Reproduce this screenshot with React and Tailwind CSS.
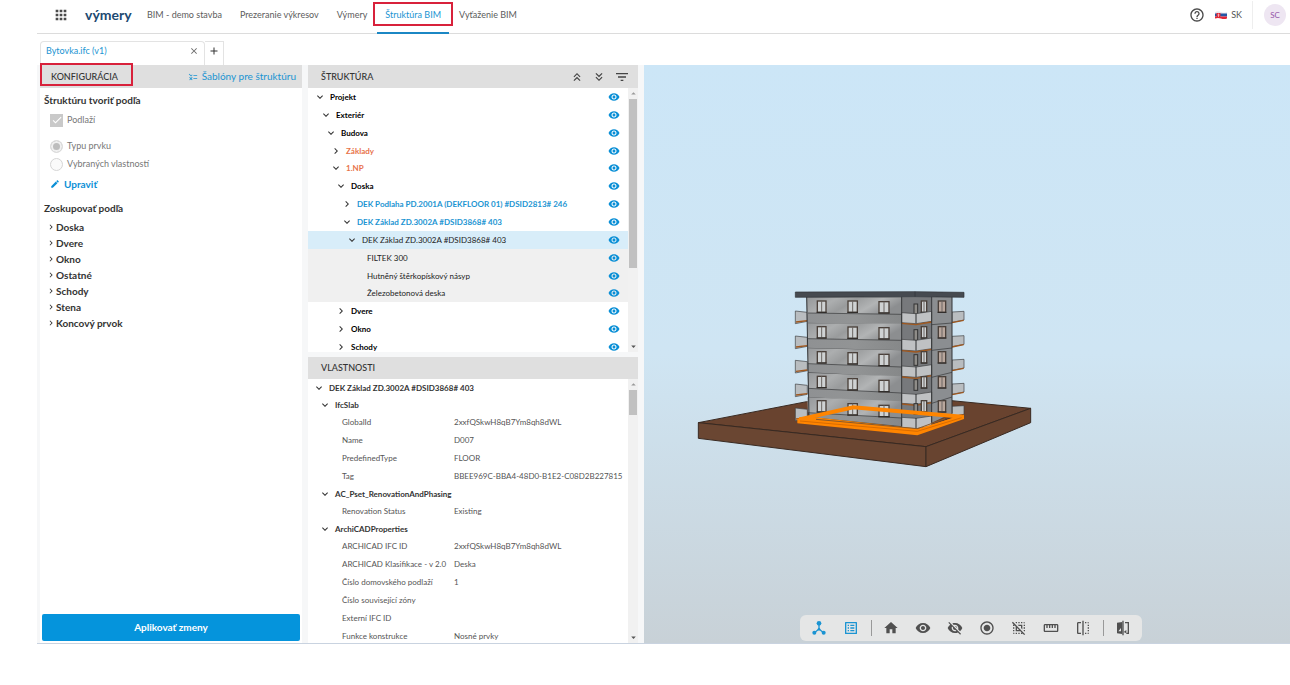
import { Fragment, useState } from "react";
import clsx from "clsx";
import {
  MdAdd,
  MdApps,
  MdArrowDropDown,
  MdArrowDropUp,
  MdCheck,
  MdChevronRight,
  MdClose,
  MdDeselect,
  MdEdit,
  MdExpandMore,
  MdFilterList,
  MdFlip,
  MdHelpOutline,
  MdHome,
  MdKeyboardDoubleArrowDown,
  MdKeyboardDoubleArrowUp,
  MdOutlineListAlt,
  MdOutlineStraighten,
  MdRadioButtonChecked,
  MdRule,
  MdVisibility,
  MdVisibilityOff,
} from "react-icons/md";

const navItems = [
  { label: "BIM - demo stavba" },
  { label: "Prezeranie výkresov" },
  { label: "Výmery" },
  { label: "Štruktúra BIM", active: true },
  { label: "Vyťaženie BIM" },
];

const groups = ["Doska", "Dvere", "Okno", "Ostatné", "Schody", "Stena", "Koncový prvok"];

const tree = [
  { label: "Projekt", indent: "pl-[6px]", open: true, tone: "font-bold text-black" },
  { label: "Exteriér", indent: "pl-[12px]", open: true, tone: "font-bold text-black" },
  { label: "Budova", indent: "pl-[17px]", open: true, tone: "font-bold text-black" },
  { label: "Základy", indent: "pl-[22px]", open: false, tone: "font-bold text-[#e8734a]" },
  { label: "1.NP", indent: "pl-[22px]", open: true, tone: "font-bold text-[#e8734a]" },
  { label: "Doska", indent: "pl-[27px]", open: true, tone: "font-bold text-black" },
  {
    label: "DEK Podlaha PD.2001A (DEKFLOOR 01) #DSID2813# 246",
    indent: "pl-[33px]",
    open: false,
    tone: "font-bold text-[#1b94d2]",
  },
  {
    label: "DEK Základ ZD.3002A #DSID3868# 403",
    indent: "pl-[33px]",
    open: true,
    tone: "font-bold text-[#1b94d2]",
  },
  {
    label: "DEK Základ ZD.3002A #DSID3868# 403",
    indent: "pl-[38px]",
    open: true,
    tone: "text-[#222]",
    row: "bg-[#d8edf9]",
  },
  { label: "FILTEK 300", indent: "pl-[59px]", tone: "text-[#222]", row: "bg-[#f0f0f0]" },
  { label: "Hutněný štěrkopískový násyp", indent: "pl-[59px]", tone: "text-[#222]", row: "bg-[#f0f0f0]" },
  { label: "Železobetonová deska", indent: "pl-[59px]", tone: "text-[#222]", row: "bg-[#f0f0f0]" },
  { label: "Dvere", indent: "pl-[27px]", open: false, tone: "font-bold text-black" },
  { label: "Okno", indent: "pl-[27px]", open: false, tone: "font-bold text-black" },
  { label: "Schody", indent: "pl-[27px]", open: false, tone: "font-bold text-black" },
];

const propertySets = [
  {
    name: "IfcSlab",
    rows: [
      ["GlobalId", "2xxfQSkwH8qB7Ym8qh8dWL"],
      ["Name", "D007"],
      ["PredefinedType", "FLOOR"],
      ["Tag", "BBEE969C-BBA4-48D0-B1E2-C08D2B227815"],
    ],
  },
  { name: "AC_Pset_RenovationAndPhasing", rows: [["Renovation Status", "Existing"]] },
  {
    name: "ArchiCADProperties",
    rows: [
      ["ARCHICAD IFC ID", "2xxfQSkwH8qB7Ym8qh8dWL"],
      ["ARCHICAD Klasifikace - v 2.0", "Deska"],
      ["Číslo domovského podlaží", "1"],
      ["Číslo související zóny", ""],
      ["Externí IFC ID", ""],
      ["Funkce konstrukce", "Nosné prvky"],
    ],
  },
];

function Header() {
  return (
    <header className="flex h-[34px] shrink-0 items-center border-b border-[#dcdcdc] pl-4">
      <button aria-label="Aplikácie" className="-mt-1 text-[#4a4a4a]">
        <MdApps className="size-4" />
      </button>
      <a href="#" className="-mt-1 ml-4 w-[62px] text-[14px] font-bold text-[#1d4a72]">
        výmery
      </a>
      <nav className="flex h-full gap-[18px] text-[9px] text-[#5c5c5c]">
        {navItems.map((item) => (
          <a
            key={item.label}
            href="#"
            className={clsx(
              "relative flex h-[33px] items-center pb-1",
              item.active && "text-[#1b94d2]"
            )}
          >
            {item.label}
            {item.active && (
              <>
                <span className="absolute -inset-x-3 top-[2px] h-6 border-2 border-[#d8213b]" />
                <span className="absolute -inset-x-2 -bottom-px h-[2px] bg-[#1b87c4]" />
              </>
            )}
          </a>
        ))}
      </nav>
      <div className="-mt-1 ml-auto flex items-center">
        <button aria-label="Pomoc" className="text-[#4a4a4a]">
          <MdHelpOutline className="size-4" />
        </button>
        <button className="ml-[10px] flex items-center gap-1 text-[9px] text-[#555]">
          <svg viewBox="0 0 24 16" className="h-2 w-3">
            <path d="M0 2q6-3 12 0t12 0v4H0z" fill="#e9e6ee" />
            <path d="M0 5h24v6H0z" fill="#2556a5" />
            <path d="M0 11h24v4q-6 2-12 0T0 15z" fill="#e32636" />
            <path d="M3 4h8v5q0 4-4 5-4-1-4-5z" fill="#e32636" />
            <path d="M7 5v7M5 8h4" stroke="#fff" />
          </svg>
          SK
        </button>
        <span className="ml-[10px] h-7 w-px bg-[#eee]" />
        <button className="mr-1 ml-[11px] flex size-[22px] items-center justify-center rounded-full bg-[#eee6f2] text-[8px] text-[#9556a8]">
          SC
        </button>
      </div>
    </header>
  );
}

function FileTabs() {
  return (
    <div className="flex h-[31px] shrink-0 items-end pl-[3px]">
      <div className="flex h-6 w-[165px] items-center justify-between rounded-t-sm border border-b-0 border-[#e3e3e3] px-[5px] pb-[6px]">
        <a href="#" className="text-[9px] text-[#1b94d2]">
          Bytovka.ifc (v1)
        </a>
        <button aria-label="Zavrieť" className="text-[#666]">
          <MdClose className="size-[10px]" />
        </button>
      </div>
      <button
        aria-label="Pridať"
        className="flex h-6 w-[19px] items-center justify-center border border-b-0 border-l-0 border-[#e3e3e3] pb-[6px] text-[#333]"
      >
        <MdAdd className="size-3" />
      </button>
    </div>
  );
}

function PanelTitle({ children }) {
  return <h2 className="text-[9px] font-medium text-[#333]">{children}</h2>;
}

function ConfigPanel() {
  const [mode] = useState("type");

  return (
    <section className="flex w-[262px] shrink-0 flex-col bg-white">
      <div className="relative flex h-[23px] items-center justify-between bg-[#dfdfdf] pr-[6px] pl-[11px]">
        <PanelTitle>KONFIGURÁCIA</PanelTitle>
        <span className="absolute -top-[2px] left-0 h-[23px] w-[93px] border-2 border-[#d8213b]" />
        <button className="flex items-center gap-1 text-[10px] text-[#1b94d2]">
          <MdRule className="size-[10px] -scale-x-100" />
          Šablóny pre štruktúru
        </button>
      </div>
      <div className="flex-1 px-1 text-[9px] text-[#777]">
        <h3 className="pt-1 text-[10px] leading-4 font-bold text-[#333]">Štruktúru tvoriť podľa</h3>
        <label className="mt-1 flex h-4 items-center gap-1 pl-[6px]">
          <input type="checkbox" checked disabled className="peer sr-only" />
          <span className="flex size-[13px] items-center justify-center bg-[#c9c9c9] text-white">
            <MdCheck className="size-3" />
          </span>
          Podlaží
        </label>
        <label className="mt-[9px] flex h-[18px] items-center gap-1 pl-[6px]">
          <input
            type="radio"
            name="mode"
            disabled
            checked={mode === "type"}
            className="size-[13px] appearance-none rounded-full border border-[#dcdcdc] bg-[#bdbdbd] shadow-[inset_0_0_0_2px_#f0f0f0]"
          />
          Typu prvku
        </label>
        <label className="flex h-[18px] items-center gap-1 pl-[6px]">
          <input
            type="radio"
            name="mode"
            disabled
            checked={mode === "properties"}
            className="size-[13px] appearance-none rounded-full border border-[#d5d5d5] bg-[#fafafa]"
          />
          Vybraných vlastností
        </label>
        <button className="mt-[3px] flex h-4 items-center gap-1 pl-[6px] text-[10px] font-bold text-[#0a8fd6]">
          <MdEdit className="size-[10px]" />
          Upraviť
        </button>
        <h3 className="mt-2 text-[10px] leading-4 font-bold text-[#333]">Zoskupovať podľa</h3>
        <ul className="mt-[3px] text-[10px] font-bold text-[#333]">
          {groups.map((group) => (
            <li key={group}>
              <button className="flex h-4 items-center pl-[2px]">
                <MdChevronRight className="size-[10px]" />
                {group}
              </button>
            </li>
          ))}
        </ul>
      </div>
      <div className="px-[2px] pb-[2px] text-center">
        <button className="h-[27px] w-full rounded-xs bg-[#0594dc] text-[10px] font-bold text-white">
          Aplikovať zmeny
        </button>
      </div>
    </section>
  );
}

function Scrollbar({ thumb }) {
  return (
    <div className="flex w-[10px] shrink-0 flex-col items-center bg-[#f1f1f1] text-[#555]">
      <MdArrowDropUp className="size-[11px] shrink-0 text-[#999]" />
      <div className={clsx("w-2 bg-[#c1c1c1]", thumb)} />
      <MdArrowDropDown className="mt-auto size-[11px] shrink-0" />
    </div>
  );
}

function StructurePanel() {
  return (
    <section className="flex h-[287px] shrink-0 flex-col bg-white">
      <div className="flex h-[23px] shrink-0 items-center bg-[#dfdfdf] pr-2 pl-[13px]">
        <PanelTitle>ŠTRUKTÚRA</PanelTitle>
        <div className="ml-auto flex items-center gap-2 text-[#444]">
          <button aria-label="Zbaliť všetko">
            <MdKeyboardDoubleArrowUp className="size-[14px]" />
          </button>
          <button aria-label="Rozbaliť všetko">
            <MdKeyboardDoubleArrowDown className="size-[14px]" />
          </button>
          <button aria-label="Filter">
            <MdFilterList className="size-4" />
          </button>
        </div>
      </div>
      <div className="flex min-h-0 flex-1 overflow-hidden">
        <ul className="-mb-1 grid flex-1 auto-rows-fr text-[8px]">
          {tree.map((node, i) => (
            <li key={i} className={clsx("flex min-h-0 items-center pr-2", node.indent, node.row)}>
              {node.open !== undefined && (
                <button aria-label="Prepnúť" className="mr-1 text-[#333]">
                  {node.open ? <MdExpandMore className="size-3" /> : <MdChevronRight className="size-3" />}
                </button>
              )}
              <span className={clsx("leading-4 whitespace-nowrap", node.tone)}>{node.label}</span>
              <button aria-label="Viditeľnosť" className="ml-auto text-[#0a8fd6]">
                <MdVisibility className="size-3" />
              </button>
            </li>
          ))}
        </ul>
        <Scrollbar thumb="h-[169px]" />
      </div>
    </section>
  );
}

function PropertiesPanel() {
  return (
    <section className="mt-[5px] flex min-h-0 flex-1 flex-col bg-white">
      <div className="flex h-[22px] shrink-0 items-center bg-[#dfdfdf] pl-[13px]">
        <PanelTitle>VLASTNOSTI</PanelTitle>
      </div>
      <div className="flex min-h-0 flex-1 overflow-hidden">
        <div className="flex-1 text-[8px] text-[#555]">
          <h3 className="flex h-[17px] items-center gap-1 pl-[5px] font-bold text-[#333]">
            <MdExpandMore className="size-3" />
            DEK Základ ZD.3002A #DSID3868# 403
          </h3>
          <table className="w-full table-fixed border-collapse">
            <colgroup>
              <col className="w-[146px]" />
              <col />
            </colgroup>
            <tbody>
              {propertySets.map((set) => (
                <Fragment key={set.name}>
                  <tr className="h-[17px]">
                    <th colSpan={2} className="p-0 pl-[11px] text-left font-bold text-[#333]">
                      <div className="flex h-[17px] items-center gap-1">
                        <MdExpandMore className="size-3" />
                        {set.name}
                      </div>
                    </th>
                  </tr>
                  {set.rows.map(([name, value]) => (
                    <tr key={name} className="h-[18px]">
                      <td className="p-0 pl-[34px] whitespace-nowrap">{name}</td>
                      <td className="p-0 whitespace-nowrap">{value}</td>
                    </tr>
                  ))}
                </Fragment>
              ))}
            </tbody>
          </table>
        </div>
        <Scrollbar thumb="h-[25px]" />
      </div>
    </section>
  );
}

// y positions of each storey, top to bottom
const storeys = [
  { left: 93, right: 92, win: [80, 80, 82], side: 80, bal: 98, base: 128, line: [130, 135] },
  { left: 168, right: 165, win: [157, 158, 160], side: 157, bal: 178, base: 210, line: [205, 212] },
  { left: 241, right: 236, win: [232, 235, 240], side: 232, bal: 258, base: 289, line: [278, 293] },
  { left: 312, right: 308, win: [306, 313, 318], side: 307, bal: 340, base: 370, line: [352, 371] },
  { left: 384, right: 375, win: [379, 388, 393], side: 379, bal: 412, base: 443, line: [412, 440] },
];

function Window({ x, y, w = 30, tint = "#cfd2d3" }) {
  return (
    <g>
      <rect x={x - w / 2} y={y - 17} width={w} height="34" fill={tint} stroke="#4a403a" strokeWidth="4" />
      <path d={`M${x} ${y - 17}v34`} stroke="#6a6562" strokeWidth="3" />
      <path d={`M${x - w / 2 - 2} ${y + 17}h${w + 4}`} stroke="#2d2a28" strokeWidth="3" />
    </g>
  );
}

function Building() {
  return (
    <svg viewBox="0 0 1050 600" className="absolute top-[215px] left-[46px] h-[200px] w-[350px]">
      <defs>
        <linearGradient id="wall" x1="0" y1="0" x2="1" y2="0">
          <stop offset="0" stopColor="#8f9193" />
          <stop offset="0.5" stopColor="#929495" />
          <stop offset="1" stopColor="#868889" />
        </linearGradient>
        <linearGradient id="band" x1="0" y1="0" x2="1" y2="0.3">
          <stop offset="0" stopColor="#96989a" />
          <stop offset="0.3" stopColor="#acaeaf" />
          <stop offset="0.5" stopColor="#999b9c" />
          <stop offset="0.75" stopColor="#b2b4b5" />
          <stop offset="1" stopColor="#8c8e90" />
        </linearGradient>
      </defs>
      <path d="M25 428 350 365 785 362 1022 385 708 500z" fill="#69432f" stroke="#392a22" strokeWidth="3" />
      <path d="M25 428 708 500V560L25 475z" fill="#6a4632" stroke="#392a22" strokeWidth="3" />
      <path d="M708 500 1022 385V428L708 560z" fill="#684430" stroke="#392a22" strokeWidth="3" />
      {storeys.map((s) => (
        <g key={s.left} stroke="#3c3e40" strokeWidth="2">
          <path d={`M316 ${s.left}l36 4v27l-36 7z`} fill="#b9bdc0" />
          <path d={`M786 ${s.right + 4}l36-2v26l-36 7z`} fill="#b9bdc0" />
          <path d={`M318 ${s.left + 33}l34-4M786 ${s.right + 36}l35-7`} stroke="#a0581f" strokeWidth="4" />
        </g>
      ))}
      <path d="M350 50H635V440L357 412z" fill="url(#wall)" />
      <path d="M635 50H725V430L680 447 635 440z" fill="#77797c" />
      <path d="M725 50H786V400L725 428z" fill="#8b8e91" />
      {storeys.map((s) => (
        <g key={s.bal}>
          <path
            d={`M352 ${s.win[0] - 27}L635 ${s.win[2] - 29}V${s.win[2] + 21}L354 ${s.win[0] + 19}z`}
            fill="url(#band)"
          />
          <path
            d={`M354 ${s.win[0] + 19}L635 ${s.win[2] + 21}M354 ${s.line[0]}L635 ${s.line[1]}M725 ${s.line[1] - 1}L786 ${s.line[0] - 1}`}
            stroke="#333537"
            strokeWidth="2"
          />
          <Window x={395} y={s.win[0]} w={26} />
          <Window x={488} y={s.win[1]} w={28} />
          <Window x={582} y={s.win[2]} w={30} />
          <Window x={702} y={s.side} w={16} />
          <Window x={756} y={s.side} w={22} tint="#b8a69c" />
          <rect x="672" y={s.side - 8} width="11" height="32" fill="#8f8d89" stroke="#333" strokeWidth="3" />
          <path
            d={`M635 ${s.bal}L678 ${s.bal + 3} 725 ${s.bal - 4}V${s.base - 4}L678 ${s.base + 3} 635 ${s.base}z`}
            fill="#bfc1c3"
            stroke="#3c3e40"
            strokeWidth="2"
          />
          <path d={`M678 ${s.bal + 2}V${s.base + 2}`} stroke="#2d2f31" strokeWidth="3" />
          <path
            d={`M635 ${s.base + 2}L678 ${s.base + 6} 725 ${s.base - 2}`}
            fill="none"
            stroke="#a0581f"
            strokeWidth="4"
          />
        </g>
      ))}
      <path d="M350 50 357 412M635 50V440M725 50V428M786 50V400" stroke="#333537" strokeWidth="3" />
      <path d="M316 36 675 35 822 37V52L675 50 316 52z" fill="#464a50" stroke="#2f3236" strokeWidth="2" />
      <path d="M675 35V50" stroke="#2f3236" strokeWidth="2" />
      <path d="M328 418 490 382 817 410 682 456z" fill="none" stroke="#ff8500" strokeWidth="12" />
      <path d="M322 416 360 410 684 446 822 404V417L682 466 322 430z" fill="#ff8500" />
      <path d="M330 423 682 454 815 413" fill="none" stroke="#c65f00" strokeWidth="2" />
      <path d="M378 418 682 446 765 416" fill="none" stroke="#8a5a2a" strokeWidth="3" />
    </svg>
  );
}

function NodesIcon({ className }) {
  return (
    <svg viewBox="0 0 24 24" className={className} fill="currentColor">
      <circle cx="12" cy="5" r="3.5" />
      <path d="M11 7h2v6l6 5-1.300 1.500L12 14.800l-5.700 4.700L5 18l6-5z" />
      <circle cx="5" cy="19" r="3" />
      <circle cx="19" cy="19" r="3" />
      <circle cx="12" cy="14" r="2" />
    </svg>
  );
}

function SplitIcon({ className }) {
  return (
    <svg viewBox="0 0 24 24" className={className} fill="currentColor">
      <path d="M3 4 11 3V21L3 20z" />
      <path d="M11 1h2v22h-2z" />
      <path d="M15 3h6v18h-4v-2h2V5h-4z" />
      <path d="m13 18 4-3v5z" />
      <path d="m5 17 4-5v5z" fill="#e5e6e6" />
    </svg>
  );
}

const tools = [
  { label: "Štruktúra", icon: NodesIcon, active: true },
  { label: "Vlastnosti", icon: MdOutlineListAlt, active: true, divider: true },
  { label: "Domov", icon: MdHome },
  { label: "Zobraziť", icon: MdVisibility },
  { label: "Skryť", icon: MdVisibilityOff },
  { label: "Izolovať", icon: MdRadioButtonChecked },
  { label: "Zrušiť výber", icon: MdDeselect },
  { label: "Merať", icon: MdOutlineStraighten },
  { label: "Rez", icon: MdFlip, divider: true },
  { label: "Porovnať", icon: SplitIcon },
];

function Viewer() {
  return (
    <section className="relative flex min-w-0 flex-1 items-end justify-center bg-linear-to-b from-[#cce6f7] via-[#cfe5f3] to-[#c8d1d7] pb-[2px] pl-2">
      <Building />
      <div className="flex h-[26px] items-center rounded-md bg-[#e5e6e6] px-[3px]">
        {tools.map(({ label, icon: Icon, active, divider }) => (
          <Fragment key={label}>
            <button
              aria-label={label}
              className={clsx("flex w-8 justify-center", active ? "text-[#1b94d2]" : "text-[#505050]")}
            >
              <Icon className="size-4" />
            </button>
            {divider && (
              <span className="flex w-2 justify-center">
                <span className="h-4 w-px bg-[#999]" />
              </span>
            )}
          </Fragment>
        ))}
      </div>
    </section>
  );
}

export default function App() {
  return (
    <div className="flex h-screen flex-col bg-white pb-[41px] pl-[37px] font-['Lato','Noto_Sans',sans-serif]">
      <Header />
      <FileTabs />
      <main className="flex min-h-0 flex-1 gap-[6px] border-b border-[#c9d3e0] bg-[#f6f7f8] pl-[3px]">
        <ConfigPanel />
        <div className="flex w-[330px] shrink-0 flex-col">
          <StructurePanel />
          <PropertiesPanel />
        </div>
        <Viewer />
      </main>
    </div>
  );
}
